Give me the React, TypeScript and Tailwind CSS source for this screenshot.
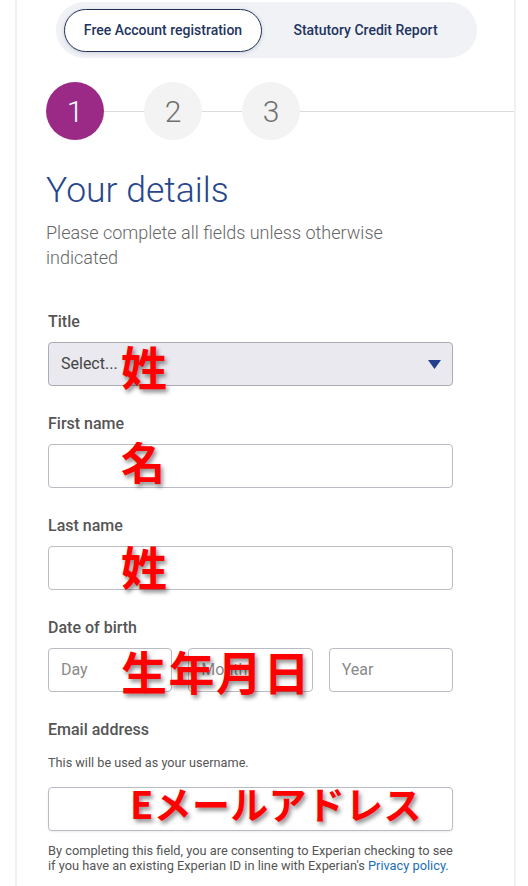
import React from "react";

const redText =
  "absolute font-['Noto_Sans_CJK_JP',sans-serif] font-bold text-[#ff0000] [text-shadow:2px_3px_4px_rgba(0,0,0,0.45)] whitespace-nowrap pointer-events-none";

function Label({ children }: { children: React.ReactNode }) {
  return (
    <div className="text-[16px] leading-[20px] font-medium text-[#555555]">
      {children}
    </div>
  );
}

function Box({ children, className = "" }: { children?: React.ReactNode; className?: string }) {
  return (
    <div
      className={
        "h-[44px] rounded-[4px] border border-[#b9bcc4] bg-white flex items-center px-[12px] text-[16px] text-[#8a8a8a] " +
        className
      }
    >
      {children}
    </div>
  );
}

export default function App() {
  return (
    <div className="relative w-[528px] h-[886px] overflow-hidden bg-white font-['Roboto',sans-serif]">
      <div className="ml-[15px] w-[501px] h-full border-l-2 border-r-2 border-[#eef0f6] pt-[2px]">
        {/* Tabs */}
        <div className="ml-[39px] w-[421px] h-[56px] rounded-full bg-[#f1f2f6] flex items-center px-[8px]">
          <div className="w-[198px] h-[43px] rounded-full border border-[#1f3256] bg-white shadow-[0_1px_4px_rgba(31,50,86,0.18)] flex items-center justify-center text-[14px] font-medium text-[#1f3560]">
            Free Account registration
          </div>
          <div className="flex-1 h-[43px] flex items-center justify-center text-[14px] font-medium text-[#1f3560]">
            Statutory Credit Report
          </div>
        </div>

        {/* Steps */}
        <div className="mt-[24px] ml-[29px] flex items-center h-[58px]">
          <div className="w-[58px] h-[58px] rounded-full bg-[#9a2a86] flex items-center justify-center text-[30px] font-light text-white">
            1
          </div>
          <div className="w-[40px] h-px bg-[#dcdcdc]" />
          <div className="w-[58px] h-[58px] rounded-full bg-[#f3f3f3] flex items-center justify-center text-[30px] font-light text-[#707070]">
            2
          </div>
          <div className="w-[40px] h-px bg-[#dcdcdc]" />
          <div className="w-[58px] h-[58px] rounded-full bg-[#f3f3f3] flex items-center justify-center text-[30px] font-light text-[#707070]">
            3
          </div>
          <div className="flex-1 h-px bg-[#dcdcdc]" />
        </div>

        {/* Heading */}
        <div className="mt-[30px] ml-[29px] text-[35.5px] leading-[40px] font-light text-[#28478c]">
          Your details
        </div>
        <div className="mt-[10px] ml-[29px] w-[405px] text-[18px] leading-[25px] font-light text-[#666666]">
          Please complete all fields unless otherwise indicated
        </div>

        {/* Form */}
        <div className="ml-[31px] w-[405px] mt-[42px] flex flex-col">
          <div>
            <Label>Title</Label>
            <div className="relative mt-[10px]">
              <div className="h-[44px] rounded-[4px] border border-[#a9adb8] bg-[#e9e9ef] flex items-center justify-between pl-[12px] pr-[11px] text-[16px] text-[#444444]">
                <span>Select...</span>
                <svg width="13" height="9" viewBox="0 0 13 9">
                  <polygon points="0,0 13,0 6.5,9" fill="#22418a" />
                </svg>
              </div>
              <span className={redText + " left-[73px] top-[0px] text-[46px] leading-[46px]"}>姓</span>
            </div>
          </div>

          <div className="mt-[28px]">
            <Label>First name</Label>
            <div className="relative mt-[10px]">
              <Box />
              <span className={redText + " left-[73px] top-[-6px] text-[44px] leading-[46px]"}>名</span>
            </div>
          </div>

          <div className="mt-[28px]">
            <Label>Last name</Label>
            <div className="relative mt-[10px]">
              <Box />
              <span className={redText + " left-[73px] top-[-4px] text-[46px] leading-[46px]"}>姓</span>
            </div>
          </div>

          <div className="mt-[28px]">
            <Label>Date of birth</Label>
            <div className="relative mt-[10px]">
              <div className="grid grid-cols-3 gap-4">
                <Box>Day</Box>
                <Box>Month</Box>
                <Box>Year</Box>
              </div>
              <span className={redText + " left-[73px] top-[-1px] text-[46px] leading-[46px] tracking-[1.5px]"}>
                生年月日
              </span>
            </div>
          </div>

          <div className="mt-[28px]">
            <Label>Email address</Label>
            <div className="mt-[15px] text-[12.7px] leading-[16px] text-[#555555]">
              This will be used as your username.
            </div>
            <div className="relative mt-[16px]">
              <Box className="shadow-[0_1px_2px_rgba(0,0,0,0.08)]" />
              <span className={redText + " left-[82px] top-[-3px] text-[38px] leading-[38px] tracking-[0.3px]"}>
                Eメールアドレス
              </span>
            </div>
            <div className="mt-[12px] w-[406px] text-[12.8px] leading-[15px] text-[#555555]">
              By completing this field, you are consenting to Experian checking to see if you have an
              existing Experian ID in line with Experian's{" "}
              <span className="text-[#1d6fb5]">Privacy policy.</span>
            </div>
          </div>
        </div>
      </div>
    </div>
  );
}
